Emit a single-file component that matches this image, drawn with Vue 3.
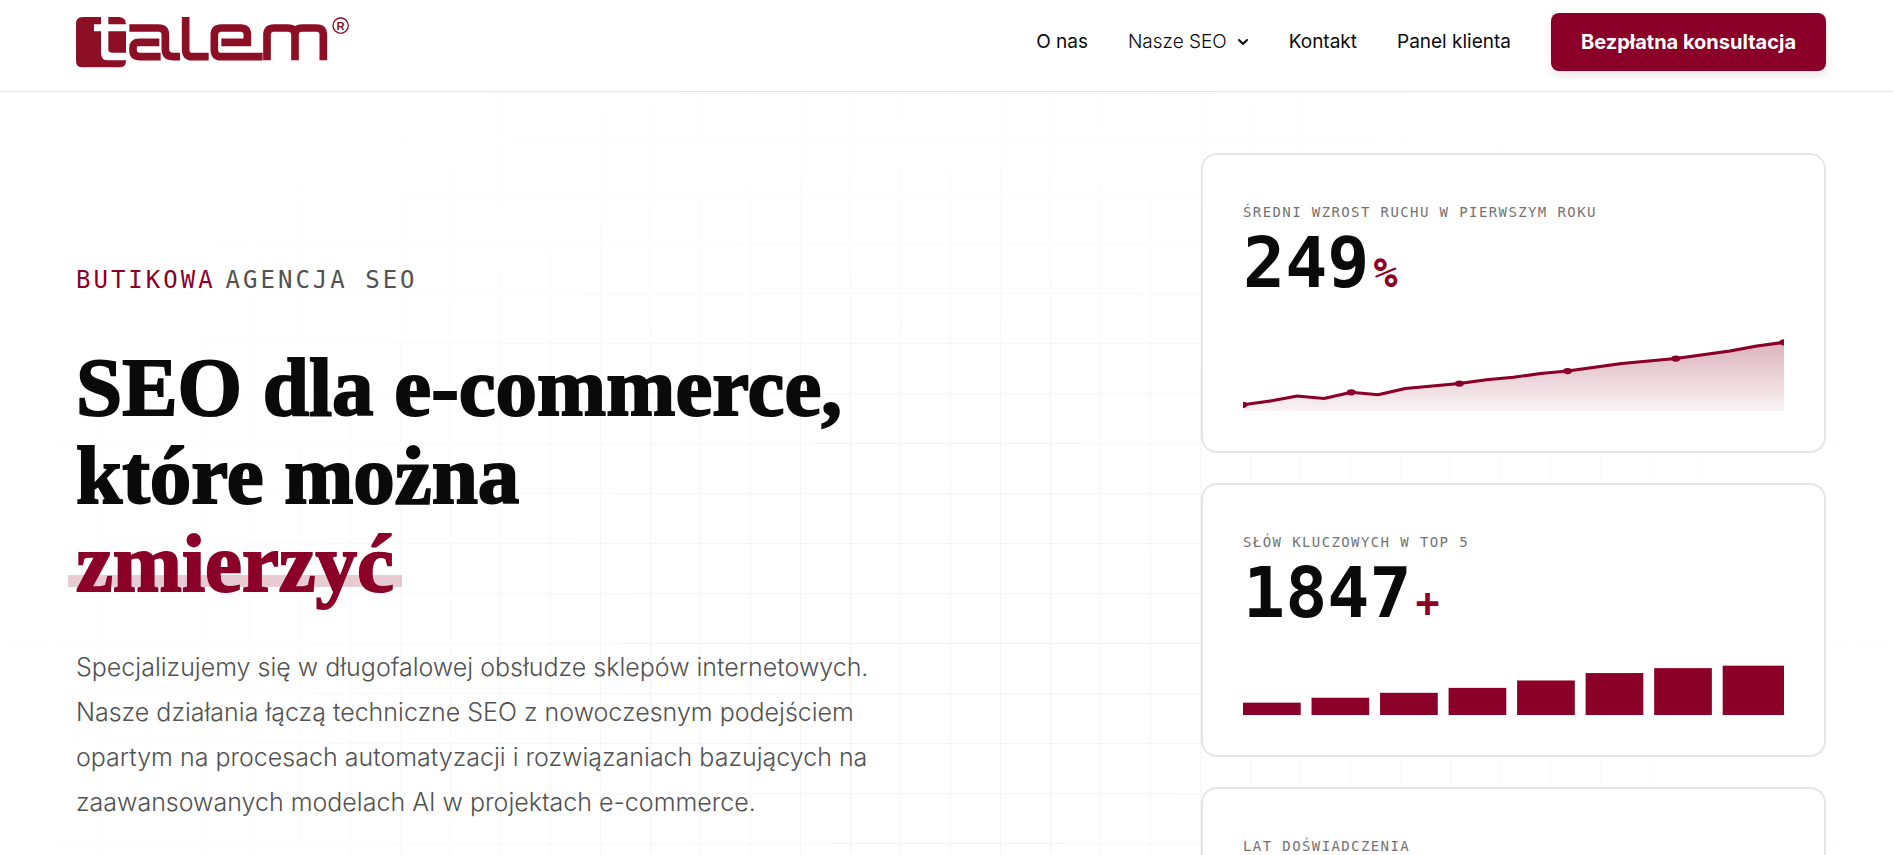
<script setup>
const navLinks = [
  { label: 'O nas', href: '#o-nas' },
  { label: 'Nasze SEO', href: '#seo', menu: true },
  { label: 'Kontakt', href: '#kontakt' },
  { label: 'Panel klienta', href: '#panel' },
]

const growth = [75, 72, 68, 70, 65, 67, 62, 60, 58, 55, 53, 50, 48, 45, 42, 40, 38, 35, 32, 28, 25]
const points = growth.map((y, i) => ({ x: i * 15, y }))
const line = 'M' + points.map((p) => `${p.x},${p.y}`).join(' L')
const area = `${line} L300,80 L0,80 Z`
const dots = points.filter((p, i) => i % 4 === 0)

const keywords = [10, 14, 18, 22, 28, 34, 38, 40]
const bars = keywords.map((h, i) => ({ x: i * 38, y: 60 - h, w: i === 7 ? 34 : 32, h }))
</script>

<template>
  <div class="page">
    <header class="header">
      <a class="logo" href="#" aria-label="talem">
        <svg viewBox="48 50 822 153" width="274" height="51" aria-hidden="true">
          <g fill="#8c0f26">
            <path d="M68 50H123V72H102V93H123V157Q123 180 145 180H198V181Q198 201 178 201H68Q48 201 48 181V70Q48 50 68 50Z" />
            <path d="M145 50H178Q198 52 198 72H145Z" />
            <path d="M145 93H198V157H155Q145 157 145 147Z" />
          </g>
          <g fill="none" stroke="#8c0f26" stroke-width="23">
            <path d="M208 83H296Q316 83 316 103V146Q316 169 340 169H360" />
            <path d="M298 126H238Q219 126 219 143V150Q219 169 240 169H302" />
            <path d="M377 50V148Q377 169 398 169H446" />
            <path d="M608 169H484Q463 169 463 148V104Q463 83 484 83H542Q562 83 562 103V126H484" />
            <path d="M621 180V104Q621 83 642 83H684Q705 83 705 104V180M705 104Q705 83 726 83H770Q790 83 790 104V180" />
          </g>
          <circle cx="842" cy="76" r="23" fill="none" stroke="#8c0f26" stroke-width="4" />
          <text x="842" y="88" text-anchor="middle" class="reg">R</text>
        </svg>
      </a>
      <nav class="nav" aria-label="Menu">
        <a v-for="l in navLinks" :key="l.label" :href="l.href" :class="{ drop: l.menu }">
          {{ l.label }}
          <svg v-if="l.menu" width="12" height="8" viewBox="0 0 12 8" aria-hidden="true">
            <path d="M2 2L6 6L10 2" fill="none" stroke="#0a0a0a" stroke-width="2" stroke-linecap="round" stroke-linejoin="round" />
          </svg>
        </a>
        <button type="button" class="cta">Bezpłatna konsultacja</button>
      </nav>
    </header>

    <main class="hero">
      <div class="grid-bg"></div>
      <section class="intro">
        <p class="eyebrow"><span class="accent">BUTIKOWA</span><span>AGENCJA SEO</span></p>
        <h1>SEO dla e-commerce,<br />które można<br /><span class="mark">zmierzyć</span></h1>
        <p class="lead">
          Specjalizujemy się w długofalowej obsłudze sklepów internetowych.<br />
          Nasze działania łączą techniczne SEO z nowoczesnym podejściem<br />
          opartym na procesach automatyzacji i rozwiązaniach bazujących na<br />
          zaawansowanych modelach AI w projektach e-commerce.
        </p>
      </section>

      <section class="cards">
        <article class="card">
          <p class="label">ŚREDNI WZROST RUCHU W PIERWSZYM ROKU</p>
          <p class="value">249<span class="unit">%</span></p>
          <svg class="line-chart" viewBox="0 0 300 80" preserveAspectRatio="none" aria-hidden="true">
            <defs>
              <linearGradient id="fade" x1="0" y1="0" x2="0" y2="1">
                <stop offset="0" stop-color="#8b0028" stop-opacity="0.3" />
                <stop offset="1" stop-color="#8b0028" stop-opacity="0.05" />
              </linearGradient>
            </defs>
            <path :d="area" fill="url(#fade)" />
            <path :d="line" fill="none" stroke="#8b0028" stroke-width="2.5" />
            <circle v-for="d in dots" :key="d.x" :cx="d.x" :cy="d.y" r="2.5" fill="#8b0028" />
          </svg>
        </article>
        <article class="card">
          <p class="label">SŁÓW KLUCZOWYCH W TOP 5</p>
          <p class="value">1847<span class="unit">+</span></p>
          <svg class="bar-chart" viewBox="0 0 300 60" preserveAspectRatio="none" aria-hidden="true">
            <rect v-for="b in bars" :key="b.x" :x="b.x" :y="b.y" :width="b.w" :height="b.h" fill="#8b0028" />
          </svg>
        </article>
        <article class="card">
          <p class="label">LAT DOŚWIADCZENIA</p>
        </article>
      </section>
    </main>
  </div>
</template>

<style scoped>
.page {
  display: flex;
  flex-direction: column;
  height: 100vh;
  overflow: hidden;
  background: #fff;
  color: #0a0a0a;
  font-family: Inter, "Noto Sans", sans-serif;
}
.header {
  flex: none;
  display: flex;
  align-items: flex-start;
  justify-content: space-between;
  padding: 13px 67px 20px 76px;
  border-bottom: 1px solid #e5e5e5;
}
.logo {
  display: block;
  padding-top: 4px;
}
.logo svg {
  display: block;
}
.reg {
  font: bold 34px "Liberation Sans", sans-serif;
  fill: #8c0f26;
}
.nav {
  display: flex;
  align-items: center;
  gap: 40px;
}
.nav a {
  color: #0a0a0a;
  font-size: 19px;
  line-height: 24px;
  text-decoration: none;
}
.nav .drop {
  display: flex;
  align-items: center;
  gap: 10px;
  font-weight: 300;
}
.cta {
  height: 58px;
  padding: 0 30px;
  border: 0;
  border-radius: 8px;
  background: #8b0028;
  color: #fff;
  font: 700 20px Inter, "Noto Sans", sans-serif;
  box-shadow: 0 4px 8px rgba(0, 0, 0, 0.1);
}
.hero {
  position: relative;
  flex: 1;
  min-height: 0;
  display: flex;
  justify-content: space-between;
  gap: 60px;
  padding: 61px 67px 0 76px;
}
.grid-bg {
  position: absolute;
  inset: 0;
  background-image:
    linear-gradient(#f4f4f4 1px, transparent 1px),
    linear-gradient(90deg, #f4f4f4 1px, transparent 1px);
  background-size: 50px 50px;
  background-position: 0 1px;
  mask-image: radial-gradient(ellipse 56% 92% at 50% 72%, #000 20%, transparent 100%);
}
.intro {
  position: relative;
  padding-top: 109px;
}
p,
h1 {
  margin: 0;
}
.eyebrow {
  display: flex;
  gap: 10px;
  color: #525252;
  font-family: "DejaVu Sans Mono", monospace;
  font-size: 24px;
  line-height: 36px;
  letter-spacing: 3px;
}
.accent {
  color: #8b0028;
}
h1 {
  margin-top: 45px;
  font-family: "Liberation Serif", serif;
  font-size: 83px;
  font-weight: 700;
  line-height: 88px;
  white-space: nowrap;
  -webkit-text-stroke: 2px currentColor;
}
.mark {
  position: relative;
  color: #8b0028;
}
.mark::after {
  content: "";
  position: absolute;
  left: -8px;
  right: -8px;
  bottom: 22px;
  height: 12px;
  background: rgba(139, 0, 40, 0.2);
}
.lead {
  margin-top: 38px;
  color: #525252;
  font-size: 25px;
  font-weight: 300;
  line-height: 45px;
  white-space: nowrap;
}
.cards {
  position: relative;
  flex: 0 0 625px;
  display: flex;
  flex-direction: column;
  gap: 30px;
}
.card {
  flex: none;
  padding: 40px;
  border: 2px solid #e5e5e5;
  border-radius: 16px;
  background: #fff;
}
.label {
  color: #737373;
  font-family: "DejaVu Sans Mono", monospace;
  font-size: 14px;
  line-height: 34px;
  letter-spacing: 0.1em;
}
.value {
  margin-bottom: 14px;
  font-family: "DejaVu Sans Mono", monospace;
  font-size: 70px;
  font-weight: 700;
  line-height: 68px;
}
.unit {
  margin-left: 4px;
  color: #8b0028;
  font-size: 40px;
  line-height: 40px;
}
.line-chart,
.bar-chart {
  display: block;
  width: 100%;
  height: 100px;
}
.bar-chart {
  height: 74px;
}
</style>

<style>
body {
  margin: 0;
}
</style>
